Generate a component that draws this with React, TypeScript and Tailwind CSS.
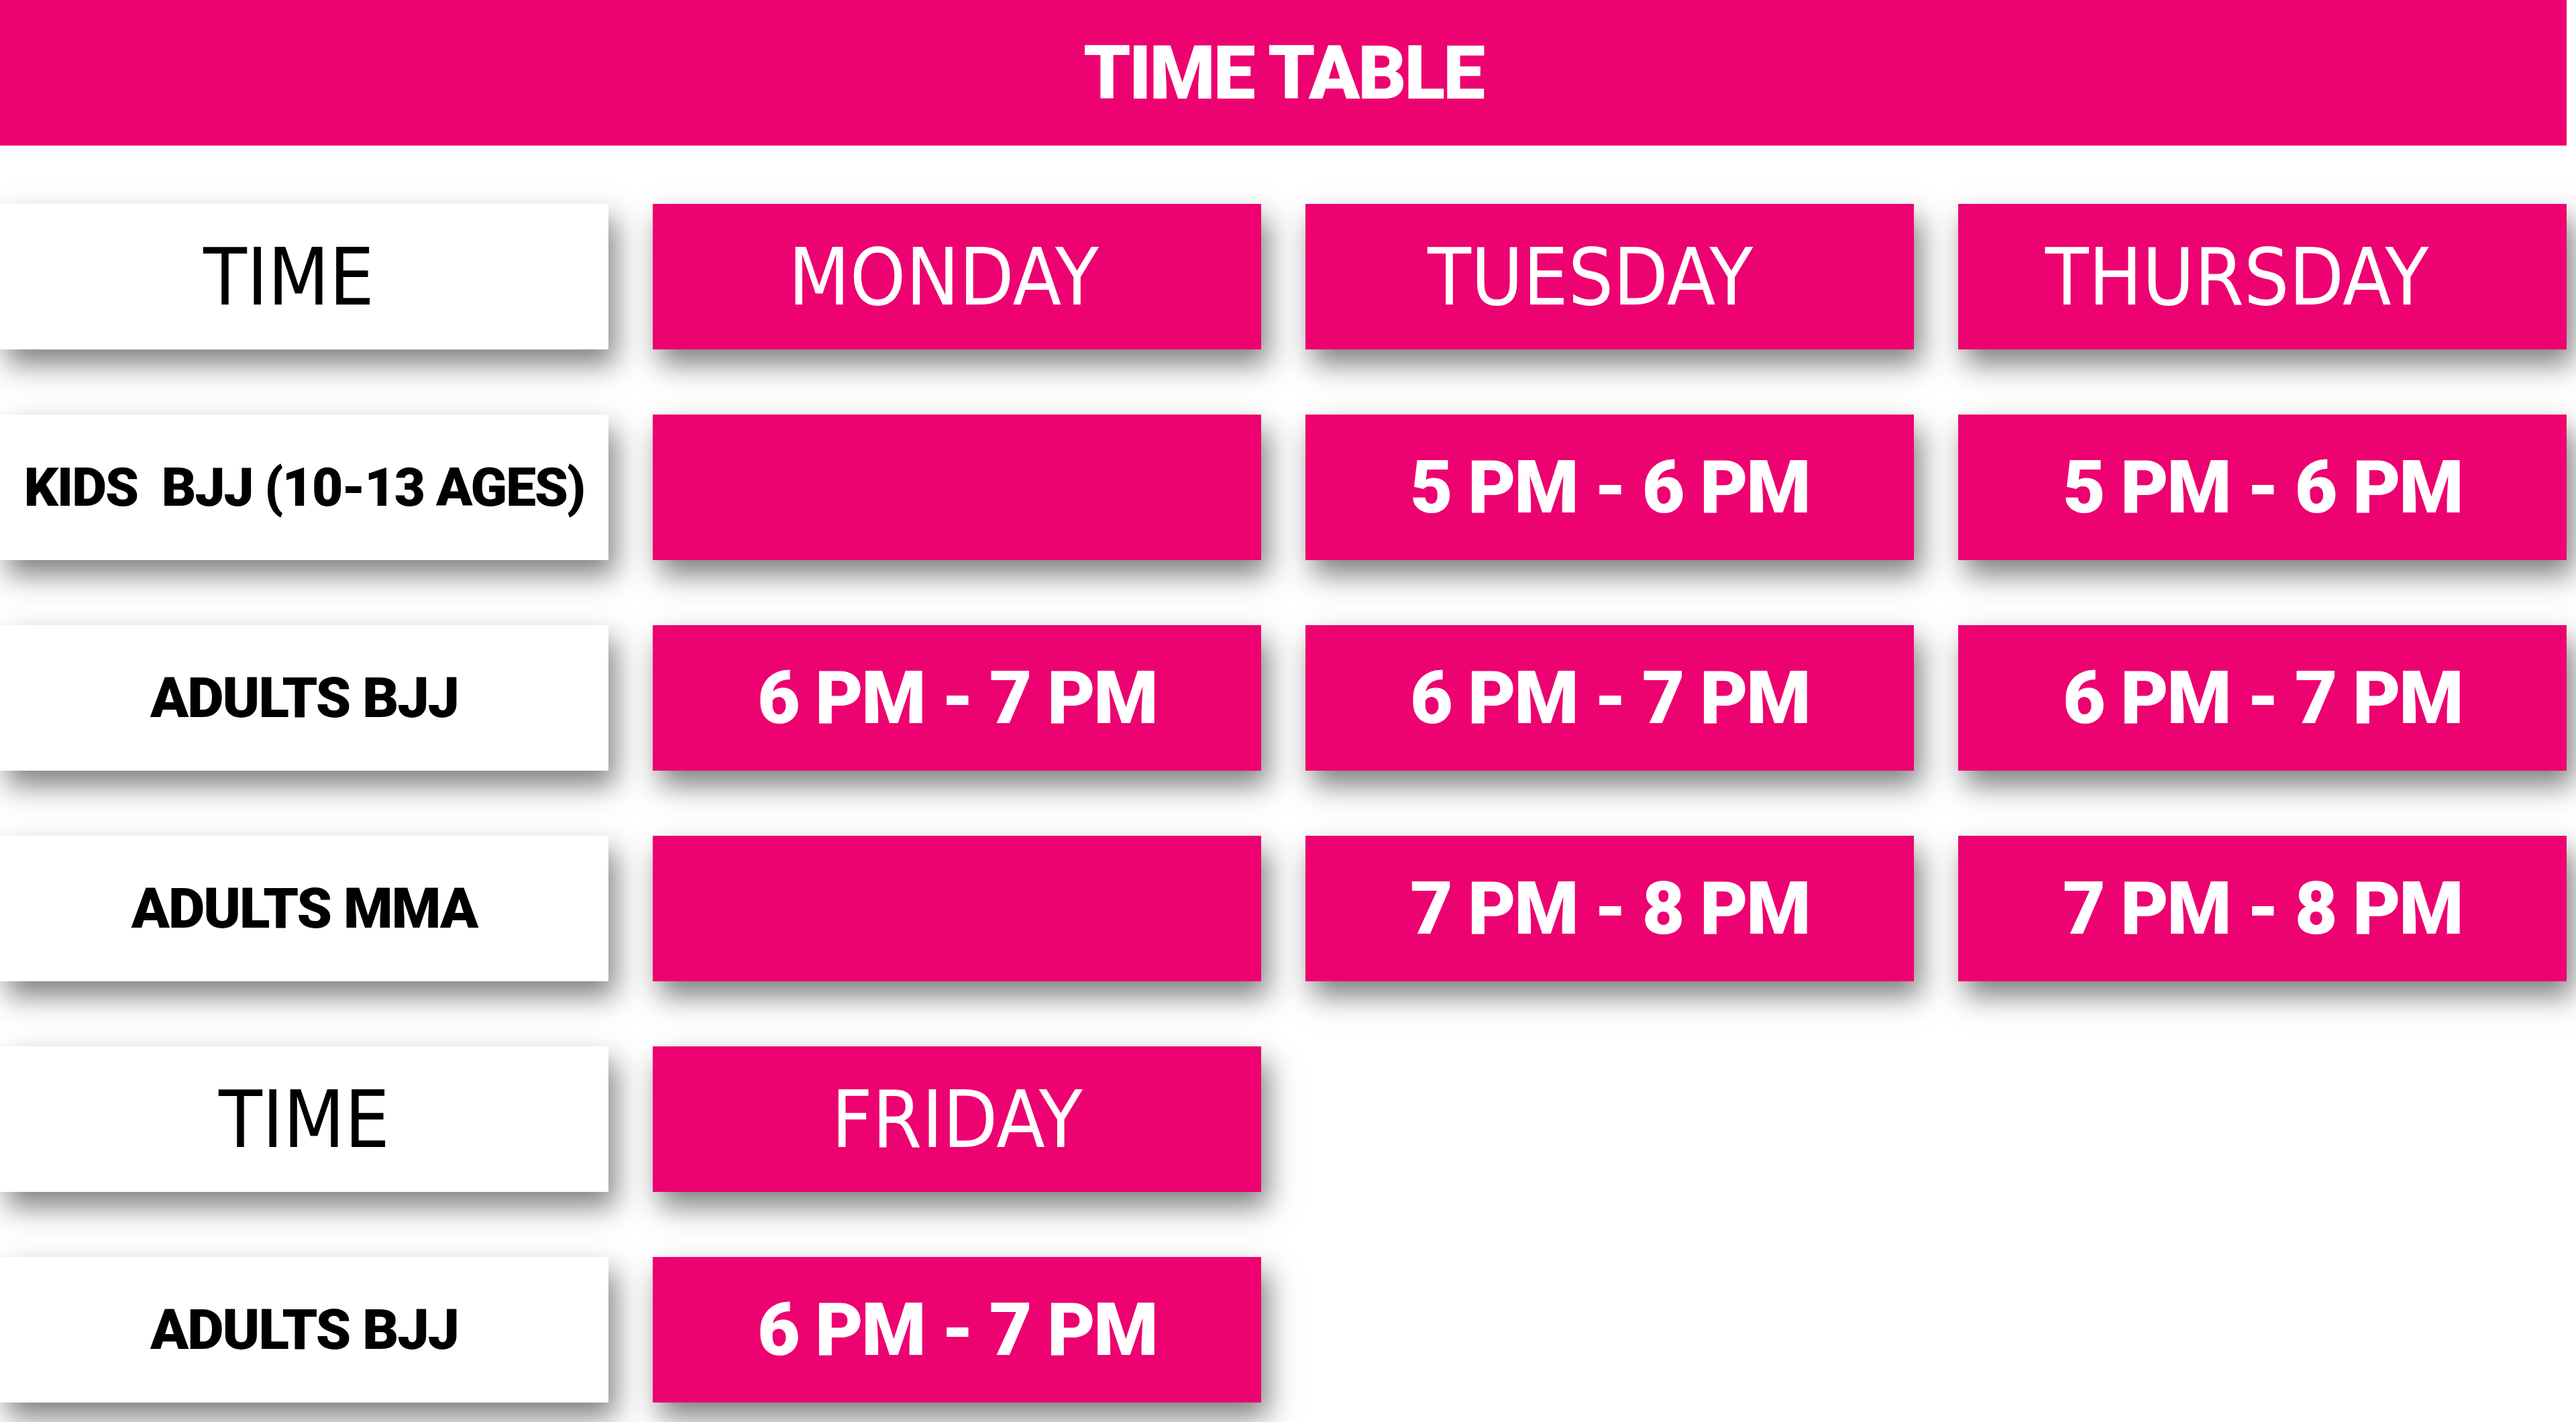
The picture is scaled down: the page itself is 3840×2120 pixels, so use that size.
import React from "react";

type Cell = {
  text: string;
  kind: "label" | "day" | "slot" | "head" | "empty";
  pr?: string;
  size?: string;
};

// shared looks
const pink = "bg-[#ec0270]";
const shadow = "shadow-[10px_22px_40px_rgba(0,0,0,0.5)]";
const heavy = "font-['Roboto','Lato',sans-serif] font-black";
const narrow = "font-['Liberation_Sans_Narrow','DejaVu_Sans_Condensed',sans-serif]";

const rows: Cell[][] = [
  [
    { text: "TIME", kind: "head", pr: "pr-[46px]" },
    { text: "MONDAY", kind: "day", pr: "pr-[40px]" },
    { text: "TUESDAY", kind: "day", pr: "pr-[58px]" },
    { text: "THURSDAY", kind: "day", pr: "pr-[76px]" },
  ],
  [
    { text: "KIDS\u00a0 BJJ (10-13 AGES)", kind: "label", size: "text-[80px]" },
    { text: "", kind: "empty" },
    { text: "5 PM - 6 PM", kind: "slot" },
    { text: "5 PM - 6 PM", kind: "slot" },
  ],
  [
    { text: "ADULTS BJJ", kind: "label" },
    { text: "6 PM - 7 PM", kind: "slot" },
    { text: "6 PM - 7 PM", kind: "slot" },
    { text: "6 PM - 7 PM", kind: "slot" },
  ],
  [
    { text: "ADULTS MMA", kind: "label" },
    { text: "", kind: "empty" },
    { text: "7 PM - 8 PM", kind: "slot" },
    { text: "7 PM - 8 PM", kind: "slot" },
  ],
  [
    { text: "TIME", kind: "head" },
    { text: "FRIDAY", kind: "day" },
  ],
  [
    { text: "ADULTS BJJ", kind: "label" },
    { text: "6 PM - 7 PM", kind: "slot" },
  ],
];

function Box({ cell }: { cell: Cell }) {
  const base = `h-[217px] flex items-center justify-center text-center whitespace-nowrap leading-none ${shadow} ${cell.pr ?? ""}`;

  if (cell.kind === "head") {
    return <div className={`${base} ${narrow} bg-white text-black text-[118px]`}>{cell.text}</div>;
  }
  if (cell.kind === "day") {
    return <div className={`${base} ${narrow} ${pink} text-white text-[118px]`}>{cell.text}</div>;
  }
  if (cell.kind === "label") {
    return (
      <div className={`${base} ${heavy} bg-white text-black ${cell.size ?? "text-[84px]"} tracking-[-2px]`}>
        {cell.text}
      </div>
    );
  }
  if (cell.kind === "slot") {
    return <div className={`${base} ${heavy} ${pink} text-white text-[110px] tracking-[-2.5px]`}>{cell.text}</div>;
  }
  return <div className={`${base} ${pink}`} />;
}

export default function App() {
  return (
    <div className="w-[3840px] h-[2120px] bg-white overflow-hidden">
      <div className="w-[3826px]">
        <div
          className={`h-[217px] ${pink} ${heavy} flex items-center justify-center text-white text-[112px] leading-none tracking-[-3px]`}
        >
          TIME TABLE
        </div>

        <div className="mt-[87px] grid grid-cols-[repeat(4,907px)] gap-x-[66px] gap-y-[97px]">
          {rows.map((row, i) => (
            <React.Fragment key={i}>
              {row.map((cell, j) => (
                <Box key={`${i}-${j}`} cell={cell} />
              ))}
              {row.length < 4 &&
                Array.from({ length: 4 - row.length }).map((_, k) => <div key={`f-${i}-${k}`} />)}
            </React.Fragment>
          ))}
        </div>
      </div>
    </div>
  );
}
